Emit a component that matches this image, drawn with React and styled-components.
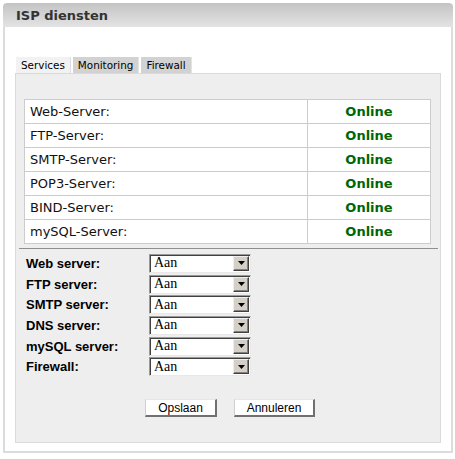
import React from "react";
import styled, { createGlobalStyle } from "styled-components";

const Global = createGlobalStyle`
  html, body { margin: 0; padding: 0; background: #fff; }
  body { font-family: "DejaVu Sans", Verdana, sans-serif; }
`;

const Frame = styled.div`
  margin: 3px 0 0 3px;
  width: 450px;
`;

const Header = styled.div`
  height: 24px;
  box-sizing: border-box;
  padding: 5px 0 0 13px;
  border-radius: 4px 4px 0 0;
  background: linear-gradient(#c4c4c4, #e3e3e3);
  font: bold 13px "DejaVu Sans", Verdana, sans-serif;
  color: #333;
  line-height: 16px;
`;

const Body = styled.div`
  border: 2px solid #dcdcdc;
  border-top: none;
  padding: 30px 10px 8px 10px;
`;

const Tabs = styled.div`
  display: flex;
  gap: 2px;
  padding-left: 1px;
  height: 16px;
`;

const Tab = styled.div`
  height: 16px;
  box-sizing: border-box;
  padding: 0 5px;
  font: 10.4px "DejaVu Sans", Verdana, sans-serif;
  line-height: 16px;
  color: #000;
  background: ${(p) => (p.$active ? "#f2f2f2" : "#d2d2d2")};
  border-right: 1px solid ${(p) => (p.$active ? "#dcdcdc" : "#e4e4e4")};
`;

const Panel = styled.div`
  background: #eeeeee;
  border: 1px solid #dadada;
  padding: 25px 9px 25px 1px;
`;

const Table = styled.table`
  margin-left: 7px;
  width: 407px;
  border-collapse: collapse;
  background: #fff;
  border: 1px solid #cccccc;
`;

const Cell = styled.td`
  height: 23px;
  padding: 0 0 0 5px;
  border: 1px solid #cccccc;
  font: 13px "DejaVu Sans", Verdana, sans-serif;
  color: #111;
`;

const Status = styled.td`
  width: 122px;
  height: 23px;
  padding: 0;
  border: 1px solid #cccccc;
  text-align: center;
  font: bold 13px "DejaVu Sans", Verdana, sans-serif;
  color: #006600;
`;

const Rule = styled.div`
  margin: 4px 2px 0 2px;
  border-top: 1px solid #8f8f8f;
  width: 419px;
`;

const Form = styled.div`
  display: grid;
  grid-template-columns: 123px 102px;
  grid-auto-rows: 20.7px;
  align-items: center;
  padding: 4px 0 0 9px;
`;

const Label = styled.div`
  font: bold 13px "Liberation Sans", Arial, sans-serif;
  color: #000;
`;

const Select = styled.div`
  display: flex;
  align-items: center;
  justify-content: space-between;
  height: 19px;
  box-sizing: border-box;
  background: #fff;
  border-top: 1px solid #9a9a9a;
  border-left: 1px solid #9a9a9a;
  border-right: 1px solid #e8e8e8;
  border-bottom: 1px solid #e8e8e8;
  box-shadow: inset 1px 1px 0 #404040;
  padding: 1px 1px 1px 4px;
  font: 14px "Liberation Serif", "Times New Roman", serif;
  color: #000;
`;

const Arrow = styled.div`
  width: 16px;
  height: 15px;
  box-sizing: border-box;
  background: #d4d0c8;
  border-top: 1px solid #eeeeee;
  border-left: 1px solid #eeeeee;
  border-right: 1px solid #404040;
  border-bottom: 1px solid #404040;
  box-shadow: inset -1px -1px 0 #808080;
  display: flex;
  align-items: center;
  justify-content: center;
`;

const Buttons = styled.div`
  display: flex;
  justify-content: center;
  gap: 17px;
  padding: 22px 0 0 12px;
`;

const Button = styled.button`
  height: 18px;
  box-sizing: border-box;
  padding: 0;
  width: ${(p) => p.$w}px;
  background: #fff;
  border-top: 1px solid #e6e6e6;
  border-left: 1px solid #cfcfcf;
  border-right: 2px solid #707070;
  border-bottom: 2px solid #707070;
  font: 12px "Liberation Sans", Arial, sans-serif;
  color: #000;
  line-height: 14px;
`;

const services = ["Web-Server:", "FTP-Server:", "SMTP-Server:", "POP3-Server:", "BIND-Server:", "mySQL-Server:"];
const settings = ["Web server:", "FTP server:", "SMTP server:", "DNS server:", "mySQL server:", "Firewall:"];

export default function App() {
  return (
    <>
      <Global />
      <Frame>
        <Header>ISP diensten</Header>
        <Body>
          <Tabs>
            <Tab $active>Services</Tab>
            <Tab>Monitoring</Tab>
            <Tab>Firewall</Tab>
          </Tabs>
          <Panel>
            <Table>
              <tbody>
                {services.map((s) => (
                  <tr key={s}>
                    <Cell>{s}</Cell>
                    <Status>Online</Status>
                  </tr>
                ))}
              </tbody>
            </Table>
            <Rule />
            <Form>
              {settings.map((s) => (
                <React.Fragment key={s}>
                  <Label>{s}</Label>
                  <Select>
                    <span>Aan</span>
                    <Arrow>
                      <svg width="7" height="4" viewBox="0 0 7 4">
                        <path d="M0 0H7L3.5 4Z" fill="#000" />
                      </svg>
                    </Arrow>
                  </Select>
                </React.Fragment>
              ))}
            </Form>
            <Buttons>
              <Button $w={72}>Opslaan</Button>
              <Button $w={81}>Annuleren</Button>
            </Buttons>
          </Panel>
        </Body>
      </Frame>
    </>
  );
}
